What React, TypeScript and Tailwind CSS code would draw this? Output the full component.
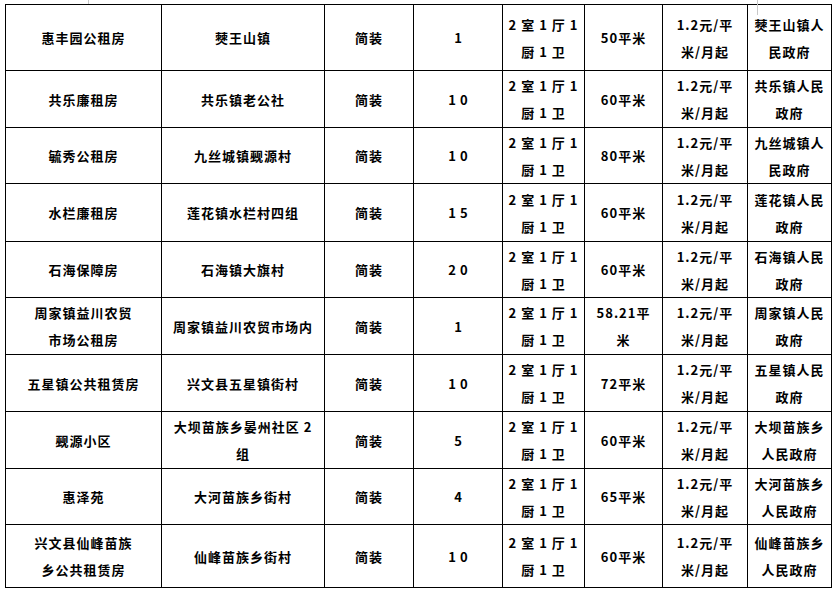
import * as React from 'react';

type Row = {
  cells: string[][];
};

// each cell is a list of lines, broken the way the original document wraps them
const rows: Row[] = [
  { cells: [['惠丰园公租房'], ['僰王山镇'], ['简装'], ['1'], ['2 室 1 厅 1', '厨 1 卫'], ['50平米'], ['1.2元/平', '米/月起'], ['僰王山镇人', '民政府']] },
  { cells: [['共乐廉租房'], ['共乐镇老公社'], ['简装'], ['10'], ['2 室 1 厅 1', '厨 1 卫'], ['60平米'], ['1.2元/平', '米/月起'], ['共乐镇人民', '政府']] },
  { cells: [['毓秀公租房'], ['九丝城镇觋源村'], ['简装'], ['10'], ['2 室 1 厅 1', '厨 1 卫'], ['80平米'], ['1.2元/平', '米/月起'], ['九丝城镇人', '民政府']] },
  { cells: [['水栏廉租房'], ['莲花镇水栏村四组'], ['简装'], ['15'], ['2 室 1 厅 1', '厨 1 卫'], ['60平米'], ['1.2元/平', '米/月起'], ['莲花镇人民', '政府']] },
  { cells: [['石海保障房'], ['石海镇大旗村'], ['简装'], ['20'], ['2 室 1 厅 1', '厨 1 卫'], ['60平米'], ['1.2元/平', '米/月起'], ['石海镇人民', '政府']] },
  { cells: [['周家镇益川农贸', '市场公租房'], ['周家镇益川农贸市场内'], ['简装'], ['1'], ['2 室 1 厅 1', '厨 1 卫'], ['58.21平', '米'], ['1.2元/平', '米/月起'], ['周家镇人民', '政府']] },
  { cells: [['五星镇公共租赁房'], ['兴文县五星镇街村'], ['简装'], ['10'], ['2 室 1 厅 1', '厨 1 卫'], ['72平米'], ['1.2元/平', '米/月起'], ['五星镇人民', '政府']] },
  { cells: [['觋源小区'], ['大坝苗族乡晏州社区 2', '组'], ['简装'], ['5'], ['2 室 1 厅 1', '厨 1 卫'], ['60平米'], ['1.2元/平', '米/月起'], ['大坝苗族乡', '人民政府']] },
  { cells: [['惠泽苑'], ['大河苗族乡街村'], ['简装'], ['4'], ['2 室 1 厅 1', '厨 1 卫'], ['65平米'], ['1.2元/平', '米/月起'], ['大河苗族乡', '人民政府']] },
  { cells: [['兴文县仙峰苗族', '乡公共租赁房'], ['仙峰苗族乡街村'], ['简装'], ['10'], ['2 室 1 厅 1', '厨 1 卫'], ['60平米'], ['1.2元/平', '米/月起'], ['仙峰苗族乡', '人民政府']] },
];

function Cell({ lines, wide }: { lines: string[]; wide?: boolean }) {
  return (
    <div className="flex flex-col items-center justify-center border-r border-b border-black text-center">
      {lines.map((line, i) => (
        <span key={i} className={wide ? 'whitespace-pre leading-[27px] tracking-[4px] pl-[4px]' : 'whitespace-pre leading-[27px]'}>
          {line}
        </span>
      ))}
    </div>
  );
}

export default function App() {
  return (
    <div className="relative w-[837px] h-[593px] bg-white overflow-hidden font-['Noto_Sans_CJK_SC',sans-serif] text-[13px] font-bold tracking-[1px] text-black">
      {/* faint page corner marks from the document view */}
      <div className="absolute left-[88px] top-0 h-[4px] w-px bg-[#c8c8c8]" />
      <div className="absolute left-[757px] top-0 h-[15px] w-px bg-[#c8c8c8]" />

      <div className="ml-[5px] mt-[4px] grid w-max grid-cols-[156px_163px_89px_89px_82px_78px_85px_84px] grid-rows-[66px_57px_56px_58px_56px_57px_57px_57px_56px_63px] border-l border-t border-black">
        {rows.map((row, r) =>
          row.cells.map((lines, c) => <Cell key={`${r}-${c}`} lines={lines} wide={c === 3} />)
        )}
      </div>
    </div>
  );
}
